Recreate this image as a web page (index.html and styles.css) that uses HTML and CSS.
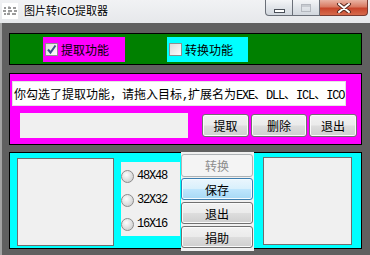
FILE: index.html
```html
<!DOCTYPE html>
<html lang="zh-CN">

<head>
    <meta charset="UTF-8">
    <title>图片转ICO提取器</title>
    <link rel="stylesheet" href="styles.css">
</head>

<body>
    <div class="window">
        <div class="titlebar">
            <svg class="app-icon" width="16" height="16" viewBox="0 0 16 16">
                <rect x="0" y="0" width="16" height="16" fill="#fff" />
                <path d="M2 5h2M6 5h3M11 5h3M1 8h3M6 8h4M12 8h3M2 11h2M5 11h3M10 11h4" stroke="#7a7a7a" stroke-width="1.5" />
                <path d="M7 3v10" stroke="#9a9a9a" stroke-width="1" stroke-dasharray="1 1" />
            </svg>
            <span class="title">图片转ICO提取器</span>
            <div class="controls">
                <div class="ctl min"><span></span></div>
                <div class="ctl max"><span></span></div>
                <div class="ctl close">
                    <svg width="16" height="10" viewBox="0 0 16 10">
                        <path d="M3 1l10 8M13 1l-10 8" stroke="#5a2a20" stroke-width="4" stroke-linecap="round" />
                        <path d="M3 1l10 8M13 1l-10 8" stroke="#fff" stroke-width="2" stroke-linecap="round" />
                    </svg>
                </div>
            </div>
        </div>

        <div class="client">
            <!-- 功能选择 -->
            <div class="panel mode">
                <label class="check pink">
                    <span class="box">
                        <svg width="11" height="11" viewBox="0 0 11 11">
                            <path d="M2 5.5l2.5 3L9.5 1.5" fill="none" stroke="#3c4f8c" stroke-width="2" />
                        </svg>
                    </span>提取功能
                </label>
                <label class="check aqua"><span class="box"></span>转换功能</label>
            </div>

            <!-- 提取 -->
            <div class="panel extract">
                <div class="hint">你勾选了提取功能，请拖入目标<span class="en">,</span>扩展名为<span class="en">EXE</span>、<span class="en">DLL</span>、<span class="en">ICL</span>、<span class="en">ICO</span></div>
                <div class="row">
                    <div class="drop"></div>
                    <button class="btn b-get">提取</button>
                    <button class="btn b-del">删除</button>
                    <button class="btn b-quit">退出</button>
                </div>
            </div>

            <!-- 转换 -->
            <div class="panel convert">
                <div class="pic left"></div>
                <div class="sizes">
                    <div class="radio"><span class="dot"></span><span class="en">48X48</span></div>
                    <div class="radio"><span class="dot"></span><span class="en">32X32</span></div>
                    <div class="radio"><span class="dot"></span><span class="en">16X16</span></div>
                </div>
                <div class="actions">
                    <button class="btn off" disabled>转换</button>
                    <button class="btn hot">保存</button>
                    <button class="btn">退出</button>
                    <button class="btn">捐助</button>
                </div>
                <div class="pic right"></div>
            </div>
        </div>
    </div>
</body>

</html>
```

FILE: styles.css
```css
* {
    margin: 0;
    padding: 0;
    box-sizing: border-box;
}

body {
    width: 370px;
    height: 255px;
    overflow: hidden;
    font-family: "Noto Sans CJK SC", sans-serif;
    font-size: 12px;
    line-height: 1;
}

.window {
    width: 370px;
    height: 255px;
    background: #606060;
}

.titlebar {
    height: 23px;
    display: flex;
    align-items: flex-start;
    background: linear-gradient(#f1f2f4, #e6e8eb);
}

.app-icon {
    margin: 3px 0 0 2px;
}

.title {
    margin: 5px 0 0 6px;
    font-size: 11px;
    color: #000;
    text-shadow: 0 0 5px #fff, 0 0 3px #fff;
}

.controls {
    display: flex;
    margin-left: auto;
    margin-right: 2px;
}

.ctl {
    height: 16px;
    border: 1px solid #6a6f78;
    border-top: none;
    display: flex;
    justify-content: center;
    align-items: center;
    background: linear-gradient(#f4f5f7, #dfe3e8 55%, #d2d7de);
}

.ctl.min {
    width: 28px;
    border-radius: 0 0 0 4px;
}

.ctl.min span {
    width: 11px;
    height: 4px;
    margin-top: 6px;
    background: #fff;
    border: 1px solid #4a4f58;
}

.ctl.max {
    width: 27px;
    border-left: none;
}

.ctl.max span {
    width: 10px;
    height: 8px;
    margin-top: 1px;
    border: 1px solid #b4b8bf;
    box-shadow: inset 0 2px 0 #c7cbd1;
}

.ctl.close {
    width: 48px;
    border-left: none;
    border-radius: 0 0 4px 0;
    border-color: #7a3a30;
    background: linear-gradient(#eab4a4, #d97a62 45%, #c8452b 55%, #d66a4c);
}

.client {
    height: 232px;
    padding: 10px 8px 0 7px;
    border-left: 2px solid #a2a2a2;
}

.panel {
    width: 353px;
    border: 1px solid #000;
}

.mode {
    height: 32px;
    display: flex;
    padding: 3px 0 0 33px;
    background: #008000;
}

.check {
    height: 25px;
    display: flex;
    align-items: center;
    padding-left: 2px;
    line-height: 25px;
}

.check.pink {
    width: 82px;
    margin-right: 42px;
    background: #ff00ff;
}

.check.aqua {
    width: 81px;
    background: #00ffff;
}

.box {
    width: 13px;
    height: 13px;
    margin-right: 3px;
    display: flex;
    justify-content: center;
    align-items: center;
    border: 1px solid #8e8f8f;
    background: linear-gradient(135deg, #dcdcdc, #fdfdfd);
}

.extract {
    height: 72px;
    margin-top: 8px;
    padding: 7px 0 0 2px;
    background: #ff00ff;
}

.hint {
    width: 334px;
    height: 25px;
    padding-left: 1px;
    line-height: 23px;
    background: #fff;
    border: 1px solid #e3e3e3;
    white-space: nowrap;
    overflow: hidden;
}

.en {
    font-family: "Liberation Mono", monospace;
    letter-spacing: -1.2px;
}

.row {
    display: flex;
    align-items: center;
    margin-top: 7px;
}

.drop {
    width: 168px;
    height: 25px;
    margin-left: 8px;
    background: #f0f0f0;
}

.btn {
    height: 22px;
    font-family: "Noto Sans CJK SC", sans-serif;
    font-size: 12px;
    color: #000;
    border: 1px solid #707070;
    border-radius: 3px;
    background: linear-gradient(#f2f2f2, #ebebeb 48%, #dddddd 52%, #cfcfcf);
    box-shadow: inset 0 0 0 1px #fafafa;
    cursor: pointer;
}

.b-get {
    width: 47px;
    height: 23px;
    margin-left: 14px;
}

.b-del {
    width: 56px;
    height: 23px;
    margin-left: 2px;
}

.b-quit {
    width: 48px;
    height: 23px;
    margin-left: 2px;
}

.convert {
    height: 97px;
    margin-top: 7px;
    display: flex;
    align-items: flex-start;
    background: #00ffff;
}

.pic {
    height: 88px;
    background: #f0f0f0;
    border: 1px solid #6e6e6e;
}

.pic.left {
    width: 97px;
    margin: 5px 0 0 7px;
}

.pic.right {
    width: 89px;
    margin: 4px 0 0 9px;
}

.sizes {
    width: 59px;
    height: 74px;
    margin: 9px 0 0 7px;
    padding-top: 2px;
    background: #f0f0f0;
}

.radio {
    height: 24px;
    display: flex;
    align-items: center;
}

.dot {
    width: 13px;
    height: 13px;
    margin-right: 3px;
    border: 1px solid #8c8c8c;
    border-radius: 50%;
    background: radial-gradient(circle at 40% 35%, #fdfdfd, #d6d6d6 70%, #c4c4c4);
}

.actions {
    width: 73px;
    height: 99px;
    margin: -1px 0 0 1px;
    padding: 2px 1px 0 0;
    display: flex;
    flex-direction: column;
    background: #f0f0f0;
}

.actions .btn {
    width: 72px;
    margin-top: 2px;
}

.actions .btn:first-child {
    height: 23px;
    margin-top: 0;
}

.actions .btn:nth-child(2) {
    margin-top: 1px;
}

.btn.off {
    color: #8d8d8d;
    border-color: #adb2b5;
    background: #f4f4f4;
    box-shadow: none;
    cursor: default;
}

.btn.hot {
    border-color: #3c7fb1;
    background: linear-gradient(#eaf6fd, #d9f0fc 48%, #bee6fd 52%, #a7d9f5);
    box-shadow: inset 0 0 0 1px #f4fbfe;
}
```
